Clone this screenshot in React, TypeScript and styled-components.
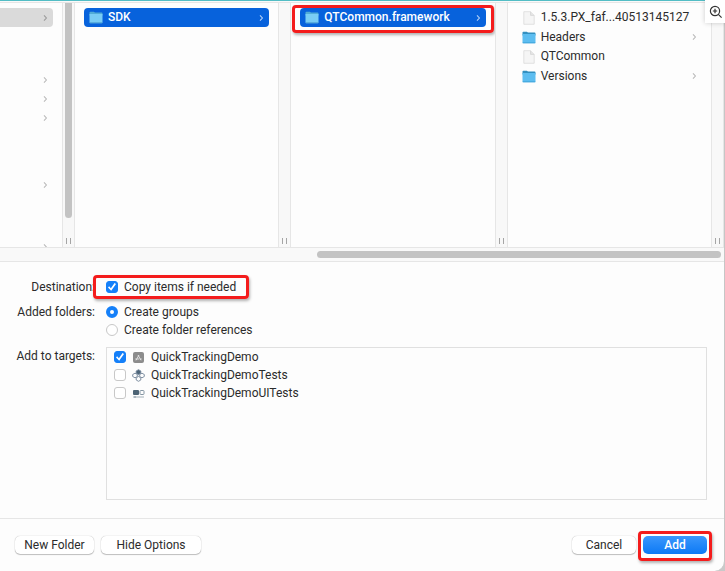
import React from "react";
import styled, { createGlobalStyle, css } from "styled-components";

const GlobalStyle = createGlobalStyle`
  * { box-sizing: border-box; }
  html, body, #root { height: 100%; }
  body {
    margin: 0;
    overflow: hidden;
    background: #c9c9c9;
    color: #2b2b2b;
    font-family: Roboto, "Liberation Sans", sans-serif;
    font-size: 12px;
    line-height: 18px;
  }
`;

const Sheet = styled.main`
  position: relative;
  display: flex;
  flex-direction: column;
  min-height: 100%;
  background: #fdfdfd;
  border-top: 1px solid #52bdc5;
  border-right: 1px solid #c6c6c6;
  border-bottom-right-radius: 10px;
`;

const Browser = styled.section`
  display: flex;
  height: 246px;
  padding-top: 2px;
  background: linear-gradient(#f9f9f9 1px, #e6e6e6 1px, #e6e6e6 2px, transparent 2px);
`;

const Column = styled.div<{ $narrow?: boolean }>`
  flex: ${(p) => (p.$narrow ? "0 0 62px" : "1 1 0")};
  min-width: 0;
  overflow: hidden;
  padding: 5px 9px 0 ${(p) => (p.$narrow ? "0" : "9px")};
`;

const Gutter = styled.div`
  flex: 0 0 13px;
  display: flex;
  flex-direction: column;
  align-items: center;
  background: #f8f8f8;
  border: solid #e6e6e6;
  border-width: 0 1px;
`;

const ScrollThumb = styled.div`
  width: 7px;
  height: 215px;
  background: #c3c3c3;
  border-radius: 0 0 4px 4px;
`;

const Grip = styled.div`
  width: 5px;
  height: 6px;
  margin: auto 0 3px;
  border: solid #a5a5a5;
  border-width: 0 1px;
`;

const Files = styled.div`
  display: grid;
  grid-template-rows: repeat(4, 1fr);
  height: 78px;
`;

const Item = styled.div<{ $state?: "active" | "path" }>`
  display: flex;
  align-items: center;
  gap: 5px;
  height: 19px;
  padding: 0 5px;
  border-radius: 4px;
  white-space: nowrap;
  ${(p) => p.$state === "active" && css`
    background: #0762dc;
    color: #fff;
    font-weight: 500;
  `}
  ${(p) => p.$state === "path" && css`
    background: #dadada;
    border-radius: 0 4px 4px 0;
  `}
`;

const ItemName = styled.span`
  flex: 1;
  line-height: 19px;
`;

const Spacer = styled.div<{ $h: number }>`
  height: ${(p) => p.$h}px;
`;

const highlight = css`
  position: relative;
  &::after {
    content: "";
    position: absolute;
    pointer-events: none;
    border: 3px solid #f41c1c;
    border-radius: 4px;
    box-shadow: 1px 2px 3px rgba(0, 0, 0, 0.3);
  }
`;

const MarkedItem = styled.div`
  ${highlight}
  &::after { inset: -3px -8px -6px -8px; }
`;

const ScrollTrack = styled.div`
  display: flex;
  justify-content: flex-end;
  height: 15px;
  padding: 3px 3px 0 0;
  background: #f9f9f9;
  border-top: 1px solid #e6e6e6;
  border-bottom: 1px solid #e6e6e6;
`;

const ScrollBar = styled.div`
  width: 56%;
  height: 7px;
  background: #c3c3c3;
  border-radius: 4px;
`;

const Options = styled.form`
  flex: 1;
  display: grid;
  grid-template-columns: 95px 1fr;
  grid-template-rows: auto auto 1fr;
  column-gap: 11px;
  padding: 16px 17px 18px 0;
`;

const FieldName = styled.div`
  text-align: right;
  white-space: nowrap;
`;

const Group = styled.div<{ $gap: number }>`
  display: flex;
  flex-direction: column;
  align-items: flex-start;
  margin-bottom: ${(p) => p.$gap}px;
`;

const Choice = styled.label<{ $marked?: boolean }>`
  display: flex;
  align-items: center;
  gap: 6px;
  height: 18px;
  white-space: nowrap;
  ${(p) => p.$marked && css`
    ${highlight}
    &::after { inset: -3px -13px -3px -13px; }
  `}
`;

const Tick = styled.input`
  appearance: none;
  display: grid;
  place-items: center;
  flex: none;
  width: 12px;
  height: 12px;
  margin: 0;
  background: #fff;
  border: 1px solid #c8c8c8;
  border-radius: 3px;
  &:checked {
    background: #1580f9;
    border-color: #1580f9;
  }
  &:checked::after {
    content: "";
    width: 8px;
    height: 8px;
    background: #fff;
    clip-path: polygon(0 55%, 14% 40%, 36% 65%, 82% 0, 100% 12%, 40% 98%);
  }
`;

const Dot = styled.input`
  appearance: none;
  flex: none;
  width: 12px;
  height: 12px;
  margin: 0;
  background: #fff;
  border: 1px solid #c8c8c8;
  border-radius: 50%;
  &:checked { border: 4px solid #1580f9; }
`;

const Targets = styled.div`
  display: flex;
  flex-direction: column;
  padding-left: 7px;
  border: 1px solid #e0e0e0;
`;

const TargetIcon = styled.svg`
  flex: none;
  width: 13px;
  height: 13px;
`;

const Footer = styled.footer`
  display: flex;
  align-items: flex-start;
  gap: 7px;
  height: 53px;
  padding: 17px 17px 0 15px;
  border-top: 1px solid #e6e6e6;
`;

const Button = styled.button<{ $width: number; $primary?: boolean }>`
  width: ${(p) => p.$width}px;
  height: 18px;
  padding: 0;
  border: 0;
  border-radius: 5px;
  background: #fff;
  color: #2b2b2b;
  font: inherit;
  box-shadow: 0 0 1px rgba(0, 0, 0, 0.35), 0 1px 1px rgba(0, 0, 0, 0.22);
  ${(p) => p.$primary && css`
    background: linear-gradient(#3b97fc, #0c79f5);
    color: #fff;
    font-weight: 500;
    box-shadow: none;
  `}
`;

const MarkedAction = styled.div`
  display: flex;
  ${highlight}
  &::after { inset: -5px -5px -7px -5px; }
`;

const PushRight = styled.div`
  display: flex;
  gap: 7px;
  margin-left: auto;
`;

const Magnify = styled.button`
  position: absolute;
  top: -1px;
  right: -1px;
  width: 20px;
  height: 23px;
  padding: 0;
  border: 0;
  background: #fff;
  box-shadow: 0 0 5px rgba(0, 0, 0, 0.2);
  svg { display: block; width: 14px; height: 14px; margin: 0 0 0 4px; }
`;

const Chevron = ({ color = "#b9b9b9" }: { color?: string }) => (
  <svg width="6" height="8" viewBox="0 0 6 8" aria-hidden="true">
    <path d="M2 1.4 4.4 4 2 6.6" fill="none" stroke={color} strokeWidth="1.1" />
  </svg>
);

const FolderIcon = ({ light }: { light?: boolean }) => (
  <svg width="14" height="13" viewBox="0 0 14 13" aria-hidden="true">
    <path d="M.5 1.6q0-.9.9-.9h3.4l1.2.9h6.6q.9 0 .9.9v2H.5z" fill={light ? "#50acd6" : "#3390c0"} />
    <path d="M.5 2.9h13v8.5q0 .8-.8.8H1.3q-.8 0-.8-.8z" fill={light ? "#78cdf5" : "#5dbdf0"} />
    <path d="M.7 11.8h12.6" stroke={light ? "#3d94cc" : "#379ed5"} strokeWidth=".8" />
  </svg>
);

const FileIcon = () => (
  <svg width="14" height="14" viewBox="0 0 14 14" aria-hidden="true">
    <path d="M1.8.7h6.7l3.7 3.7v8.9H1.8z" fill="#f5f5f5" stroke="#dadada" strokeWidth=".8" />
    <path d="M8.5.7v3.7h3.7" fill="#e4e4e4" stroke="#d2d2d2" strokeWidth=".7" />
  </svg>
);

const AppIcon = () => (
  <TargetIcon viewBox="0 0 13 13" aria-hidden="true">
    <rect x="1" y="1" width="11" height="11" rx="2" fill="#8c8c8c" />
    <path d="M4 9.3 7 4M6 4l3 5.3M3.3 8h4M8.3 8h1.4" stroke="#e6e6e6" strokeWidth=".9" fill="none" />
  </TargetIcon>
);

const TestsIcon = () => (
  <TargetIcon viewBox="0 0 13 13" aria-hidden="true">
    <g fill="#fdfdfd" stroke="#74869a" strokeWidth=".9">
      <path d="M6.5.7 8.8 2v2.3L6.5 5.7 4.2 4.3V2z" fill="#4d6579" />
      <path d="M3 4.2 5.3 5.5v2L3 8.8.7 7.5v-2z" />
      <path d="M10 4.2l2.3 1.3v2L10 8.8 7.7 7.5v-2z" />
      <path d="M6.5 7.5 8.8 8.8V11l-2.3 1.3L4.2 11V8.8z" />
    </g>
  </TargetIcon>
);

const UITestsIcon = () => (
  <TargetIcon viewBox="0 0 13 13" aria-hidden="true">
    <rect x="1" y="3" width="6" height="5" rx="1" fill="#4d6475" />
    <rect x="8" y="3.5" width="4" height="4" rx=".8" fill="none" stroke="#8495a2" />
    <path d="M1 10h11" stroke="#a3b0b9" />
    <path d="M3 9v2" stroke="#8495a2" />
  </TargetIcon>
);

const files = [
  { name: "1.5.3.PX_faf...40513145127", folder: false },
  { name: "Headers", folder: true },
  { name: "QTCommon", folder: false },
  { name: "Versions", folder: true },
];

const targets = [
  { name: "QuickTrackingDemo", checked: true, Icon: AppIcon },
  { name: "QuickTrackingDemoTests", checked: false, Icon: TestsIcon },
  { name: "QuickTrackingDemoUITests", checked: false, Icon: UITestsIcon },
];

const PathRow = ({ active }: { active?: boolean }) => (
  <Item $state={active ? "path" : undefined}>
    <ItemName />
    <Chevron color={active ? "#9b9b9b" : undefined} />
  </Item>
);

const SelectedFolder = ({ name }: { name: string }) => (
  <Item $state="active">
    <FolderIcon light />
    <ItemName>{name}</ItemName>
    <Chevron color="#b5d0f6" />
  </Item>
);

export default function App() {
  return (
    <>
      <GlobalStyle />
      <Sheet>
        <Browser>
          <Column $narrow>
            <PathRow active />
            <Spacer $h={43} />
            <PathRow />
            <PathRow />
            <PathRow />
            <Spacer $h={48} />
            <PathRow />
            <Spacer $h={43} />
            <PathRow />
          </Column>
          <Gutter>
            <ScrollThumb />
            <Grip />
          </Gutter>
          <Column>
            <SelectedFolder name="SDK" />
          </Column>
          <Gutter><Grip /></Gutter>
          <Column>
            <MarkedItem>
              <SelectedFolder name="QTCommon.framework" />
            </MarkedItem>
          </Column>
          <Gutter><Grip /></Gutter>
          <Column>
            <Files>
              {files.map((f) => (
                <Item key={f.name}>
                  {f.folder ? <FolderIcon /> : <FileIcon />}
                  <ItemName>{f.name}</ItemName>
                  {f.folder && <Chevron />}
                </Item>
              ))}
            </Files>
          </Column>
          <Gutter><Grip /></Gutter>
        </Browser>
        <ScrollTrack><ScrollBar /></ScrollTrack>

        <Options>
          <FieldName>Destination:</FieldName>
          <Group $gap={7}>
            <Choice $marked>
              <Tick type="checkbox" defaultChecked />
              Copy items if needed
            </Choice>
          </Group>
          <FieldName>Added folders:</FieldName>
          <Group $gap={8}>
            <Choice>
              <Dot type="radio" name="folders" defaultChecked />
              Create groups
            </Choice>
            <Choice>
              <Dot type="radio" name="folders" />
              Create folder references
            </Choice>
          </Group>
          <FieldName>Add to targets:</FieldName>
          <Targets>
            {targets.map(({ name, checked, Icon }) => (
              <Choice key={name}>
                <Tick type="checkbox" defaultChecked={checked} />
                <Icon />
                {name}
              </Choice>
            ))}
          </Targets>
        </Options>

        <Footer>
          <Button type="button" $width={79}>New Folder</Button>
          <Button type="button" $width={100}>Hide Options</Button>
          <PushRight>
            <Button type="button" $width={64}>Cancel</Button>
            <MarkedAction>
              <Button type="button" $width={64} $primary>Add</Button>
            </MarkedAction>
          </PushRight>
        </Footer>
        <Magnify type="button" aria-label="Zoom in">
          <svg viewBox="0 0 14 14" fill="none" stroke="#333" strokeWidth="1.2">
            <circle cx="6" cy="6" r="4.6" />
            <path d="M9.3 9.3 12.6 12.6M3.8 6h4.4M6 3.8v4.4" />
          </svg>
        </Magnify>
      </Sheet>
    </>
  );
}
